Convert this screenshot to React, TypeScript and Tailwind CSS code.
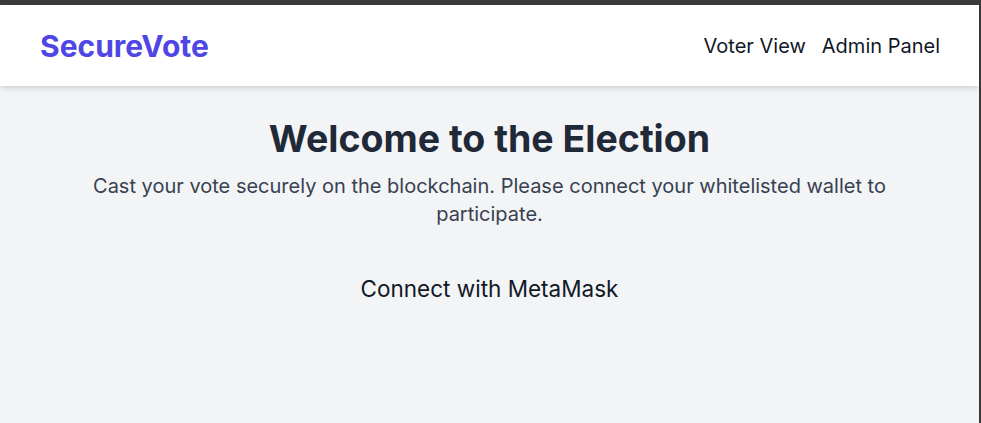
export default function App() {
  return (
    <div
      className="flex h-[423px] w-[981px] flex-col overflow-hidden bg-[#3a3a3a]"
      style={{ fontFamily: 'Inter, "Noto Sans", sans-serif' }}
    >
      <div className="mt-[5px] mr-[2px] flex flex-1 flex-col bg-[#f3f4f6]">
        <header className="relative z-10 flex h-[81px] items-center justify-between bg-white pl-10 pr-[39px] shadow-md">
          <h1 className="text-3xl font-bold text-[#4f46e5]">SecureVote</h1>
          <nav className="flex gap-4 text-xl text-[#111827]">
            <a href="#">Voter View</a>
            <a href="#">Admin Panel</a>
          </nav>
        </header>
        <main className="flex flex-col items-center px-8 pt-[33px] text-center">
          <h2 className="text-[37.5px] leading-10 font-bold text-[#1f2937]">Welcome to the Election</h2>
          <p className="mt-[13px] max-w-[820px] text-xl leading-7 text-[#374151]">
            Cast your vote securely on the blockchain. Please connect your whitelisted wallet to
            participate.
          </p>
          <button className="mt-[47px] text-[22.5px] leading-7 text-[#111827]">Connect with MetaMask</button>
        </main>
      </div>
    </div>
  )
}
